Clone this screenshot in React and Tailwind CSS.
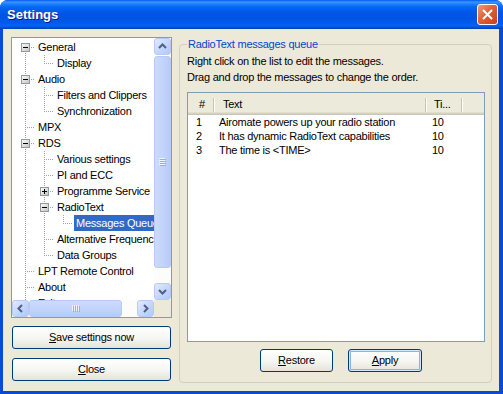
import React from "react";

const TREE = [
  { label: "General", guides: ["F"], box: "-" },
  { label: "Display", guides: ["I", "L"] },
  { label: "Audio", guides: ["T"], box: "-" },
  { label: "Filters and Clippers", guides: ["I", "T"] },
  { label: "Synchronization", guides: ["I", "L"] },
  { label: "MPX", guides: ["T"] },
  { label: "RDS", guides: ["T"], box: "-" },
  { label: "Various settings", guides: ["I", "T"] },
  { label: "PI and ECC", guides: ["I", "T"] },
  { label: "Programme Service", guides: ["I", "T"], box: "+" },
  { label: "RadioText", guides: ["I", "T"], box: "-" },
  { label: "Messages Queue", guides: ["I", "I", "L"], selected: true },
  { label: "Alternative Frequencies", guides: ["I", "T"] },
  { label: "Data Groups", guides: ["I", "L"] },
  { label: "LPT Remote Control", guides: ["T"] },
  { label: "About", guides: ["T"] },
  { label: "Exit", guides: ["T"] },
];

const MESSAGES = [
  { n: 1, text: "Airomate powers up your radio station", time: 10 },
  { n: 2, text: "It has dynamic RadioText capabilities", time: 10 },
  { n: 3, text: "The time is <TIME>", time: 10 },
];

// one 19x16 cell of dotted tree lines, optionally with the +/- box
function Guide({ type, box }) {
  const vert =
    type === "I" || type === "T" ? [0, 16] : type === "L" ? [0, 9] : type === "F" ? [8, 16] : null;
  const horiz = type === "T" || type === "L" || type === "F";
  return (
    <svg width="19" height="16" className="shrink-0">
      <defs>
        <linearGradient id="xpbox" x1="0" y1="0" x2="1" y2="1">
          <stop offset="0" stopColor="#FFFFFF" />
          <stop offset="1" stopColor="#C4C1B4" />
        </linearGradient>
      </defs>
      {vert && (
        <line x1="9.5" x2="9.5" y1={vert[0]} y2={vert[1]} stroke="#A0A0A0" strokeDasharray="1 1" />
      )}
      {horiz && <line x1="11" x2="19" y1="8.5" y2="8.5" stroke="#A0A0A0" strokeDasharray="1 1" />}
      {box && (
        <g>
          <rect x="5.5" y="4.5" width="8" height="8" fill="url(#xpbox)" stroke="#8C9AA5" />
          <line x1="7" x2="12" y1="8.5" y2="8.5" stroke="#000" />
          {box === "+" && <line x1="9.5" x2="9.5" y1="6" y2="11" stroke="#000" />}
        </g>
      )}
    </svg>
  );
}

function ScrollBtn({ dir }) {
  const pts = {
    up: "5,10 8.5,6.5 12,10",
    down: "5,7 8.5,10.5 12,7",
    left: "10,5 6.5,8.5 10,12",
    right: "7,5 10.5,8.5 7,12",
  }[dir];
  return (
    <div className="w-[17px] h-[17px] shrink-0 rounded-[3px] border border-[#B7CAF5] bg-[linear-gradient(135deg,#E1EAFE,#C2D3FC_60%,#B4C8F8)]">
      <svg width="15" height="15" viewBox="1 1 15 15">
        <polyline points={pts} fill="none" stroke="#4D6185" strokeWidth="2" />
      </svg>
    </div>
  );
}

function Grip({ vertical }) {
  return vertical ? (
    <svg width="7" height="8">
      {[0, 2, 4, 6].map((y) => (
        <g key={y}>
          <line x1="0" x2="6" y1={y + 0.5} y2={y + 0.5} stroke="#EEF4FE" />
          <line x1="1" x2="7" y1={y + 1.5} y2={y + 1.5} stroke="#8CB0F8" />
        </g>
      ))}
    </svg>
  ) : (
    <svg width="8" height="7">
      {[0, 2, 4, 6].map((x) => (
        <g key={x}>
          <line y1="0" y2="6" x1={x + 0.5} x2={x + 0.5} stroke="#EEF4FE" />
          <line y1="1" y2="7" x1={x + 1.5} x2={x + 1.5} stroke="#8CB0F8" />
        </g>
      ))}
    </svg>
  );
}

function XPButton({ children, def, className = "" }) {
  return (
    <button
      className={`h-[23px] rounded-[3px] border border-[#003C74] bg-[linear-gradient(to_bottom,#FFFFFF,#F5F5F1_55%,#E4E3DB)] text-[11px] text-black ${
        def ? "shadow-[inset_0_0_0_1px_#CEE7FF,inset_0_0_0_2px_#8EB1E8]" : ""
      } ${className}`}
    >
      {children}
    </button>
  );
}

function HeaderSep() {
  return <span className="w-[2px] h-[14px] shrink-0 border-l border-[#C7C5B2] border-r border-r-white" />;
}

export default function App() {
  return (
    <div className="w-[503px] h-[394px] flex flex-col rounded-t-[8px] bg-[#0A4BD6] overflow-hidden font-['Liberation_Sans',Arial,sans-serif] text-[11px] tracking-[-0.25px] text-black select-none">
      {/* Title bar */}
      <div className="h-[29px] shrink-0 flex items-center justify-between pl-[7px] pr-[5px] bg-[linear-gradient(to_bottom,#0058EE_0%,#3D95FF_7%,#1A80FF_14%,#0366F5_25%,#0056E8_45%,#0054E3_60%,#0058EB_78%,#0263F8_88%,#0050D8_95%,#003DB0_100%)]">
        <span className="text-white font-bold text-[13px] tracking-normal [text-shadow:1px_1px_0_#0A1A8A]">
          Settings
        </span>
        <div className="w-[21px] h-[21px] rounded-[3px] border border-white bg-[linear-gradient(135deg,#F09A7E,#E2603A_45%,#C7401B)] flex items-center justify-center">
          <svg width="11" height="11">
            <line x1="1" y1="1" x2="10" y2="10" stroke="#fff" strokeWidth="2" />
            <line x1="10" y1="1" x2="1" y2="10" stroke="#fff" strokeWidth="2" />
          </svg>
        </div>
      </div>

      {/* Client area */}
      <div className="flex-1 ml-[3px] mr-[4px] mb-[3px] bg-[#ECE9D8] flex pl-[8px] pt-[8px] gap-[7px]">
        {/* Left column */}
        <div className="w-[161px] flex flex-col">
          <div className="h-[281px] border border-[#7F9DB9] bg-white grid grid-cols-[142px_17px] grid-rows-[262px_17px]">
            <div className="overflow-hidden pl-[4px] pt-[1px]">
              {TREE.map((row) => (
                <div key={row.label} className="h-[16px] flex items-center whitespace-nowrap">
                  {row.guides.map((g, i) => (
                    <Guide key={i} type={g} box={i === row.guides.length - 1 ? row.box : null} />
                  ))}
                  <span
                    className={`ml-[1px] pl-[2px] pr-[2px] h-[16px] leading-[16px] ${
                      row.selected ? "bg-[#316AC5] text-white" : ""
                    }`}
                  >
                    {row.label}
                  </span>
                </div>
              ))}
            </div>
            {/* vertical scrollbar */}
            <div className="flex flex-col bg-[#FCFCFA]">
              <ScrollBtn dir="up" />
              <div className="mt-[1px] h-[212px] rounded-[3px] border border-[#B7CAF5] bg-[linear-gradient(to_right,#CCDBFD,#C1D3FB_60%,#B7CBF9)] flex items-center justify-center">
                <Grip vertical />
              </div>
              <div className="flex-1" />
              <ScrollBtn dir="down" />
            </div>
            {/* horizontal scrollbar */}
            <div className="flex bg-[#FCFCFA]">
              <ScrollBtn dir="left" />
              <div className="w-[93px] rounded-[3px] border border-[#B7CAF5] bg-[linear-gradient(to_bottom,#CCDBFD,#C1D3FB_60%,#B7CBF9)] flex items-center justify-center">
                <Grip />
              </div>
              <div className="flex-1" />
              <ScrollBtn dir="right" />
            </div>
            <div className="bg-[#ECE9D8]" />
          </div>

          <XPButton className="mt-[8px] w-[159px] ml-[1px]">
            <span className="underline">S</span>ave settings now
          </XPButton>
          <XPButton className="mt-[9px] w-[159px] ml-[1px]">
            <span className="underline">C</span>lose
          </XPButton>
        </div>

        {/* Group box */}
        <fieldset className="mt-[1px] w-[313px] h-[345px] border border-[#D0D0BF] rounded-[4px] pl-[7px] pr-[6px] pb-0 pt-0 m-0 min-w-0">
          <legend className="px-[1px] leading-[13px] text-[#0046D5]">RadioText messages queue</legend>
          <div className="mt-[2px] leading-[16px]">Right click on the list to edit the messages.</div>
          <div className="leading-[16px]">Drag and drop the messages to change the order.</div>

          {/* List view */}
          <div className="mt-[7px] w-[298px] h-[250px] border border-[#7F9DB9] bg-white">
            <div className="h-[22px] flex items-center pt-[1px] bg-[#EBEADB] shadow-[inset_0_-1px_#CBC7B8,inset_0_-2px_#D6D2C2,inset_0_-3px_#E2DECD]">
              <span className="w-[25px] pl-[11px]">#</span>
              <HeaderSep />
              <span className="w-[210px] pl-[8px]">Text</span>
              <HeaderSep />
              <span className="w-[34px] pl-[7px]">Ti...</span>
              <HeaderSep />
            </div>
            {MESSAGES.map((m) => (
              <div key={m.n} className="h-[14px] leading-[14px] flex whitespace-nowrap">
                <span className="w-[26px] pl-[8px]">{m.n}</span>
                <span className="w-[212px] pl-[5px]">{m.text}</span>
                <span className="w-[36px] pl-[6px]">{m.time}</span>
              </div>
            ))}
          </div>

          <div className="mt-[7px] flex gap-[15px] pl-[73px]">
            <XPButton className="w-[73px]">
              <span className="underline">R</span>estore
            </XPButton>
            <XPButton def className="w-[74px]">
              <span className="underline">A</span>pply
            </XPButton>
          </div>
        </fieldset>
      </div>
    </div>
  );
}
